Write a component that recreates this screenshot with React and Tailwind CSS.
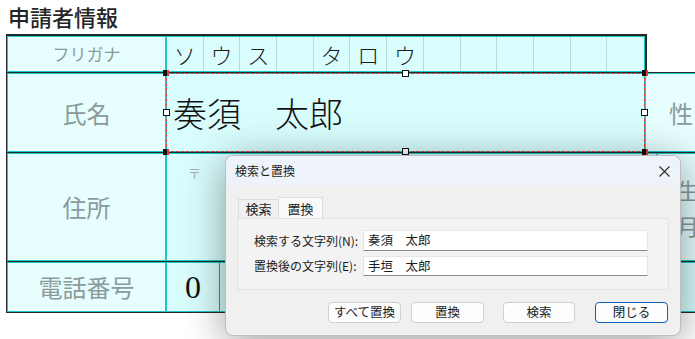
import React from "react";

const kana = ["ソ", "ウ", "ス", "", "タ", "ロ", "ウ", "", "", "", "", "", ""];

const Label = ({ className, children }) => (
    <div className={`flex shrink-0 items-center justify-center border border-[#1ec8c8] bg-[#e6fefe] text-[#8b9a9a] ${className}`}>
        {children}
    </div>
);

const Handle = ({ className, filled }) => (
    <div
        className={`absolute ${filled ? "h-[6px] w-[6px] bg-[#111] border-r-2 border-[#e53935]" : "h-[7px] w-[7px] border border-[#111] bg-white"} ${className}`}/>
);

const Dialog = () => (
    <div
        className="absolute left-[225px] top-[155px] h-[181px] w-[456px] overflow-hidden rounded-[8px] border border-[#bdbdbd] bg-[#f0f0f0] text-[12px] text-[#1b1b1b] shadow-[0_6px_42px_rgba(0,0,0,0.4)]">
        <div className="flex h-[30px] items-center justify-between bg-[#eef2f9] pl-[9px] pr-[10px]">
            <span className="leading-none">検索と置換</span>
            <svg className="h-[11px] w-[11px]" viewBox="0 0 11 11" fill="none" stroke="#2a2a2a" strokeWidth="1.1">
                <path d="M0.5 0.5 L10.5 10.5 M10.5 0.5 L0.5 10.5"/>
            </svg>
        </div>
        <div className="pl-[11px] pr-[12px] pt-[11px]">
            <div className="flex items-end pl-[1px]">
                <div className="flex h-[19px] w-[41px] items-center justify-center border border-b-0 border-[#dcdcdc] bg-[#f0f0f0] text-[13px]">
                    検索
                </div>
                <div className="flex h-[21px] w-[44px] items-start justify-center border border-b-0 border-l-0 border-[#dcdcdc] bg-[#f9f9f9] pt-[1px] text-[13px]">
                    置換
                </div>
            </div>
            <div className="h-[72px] w-[432px] border border-[#e2e2e2] bg-[#f3f3f3] pl-[16px] pt-[11px]">
                <div className="flex h-[21px] items-center">
                    <span className="w-[109px]">検索する文字列(N):</span>
                    <div className="flex h-[21px] w-[285px] items-center border border-[#e6e6e6] border-b-[#8a8a8a] bg-white pl-[4px] text-[12.5px]">
                        奏須　太郎
                    </div>
                </div>
                <div className="mt-[5px] flex h-[20px] items-center">
                    <span className="w-[109px]">置換後の文字列(E):</span>
                    <div className="flex h-[20px] w-[285px] items-center border border-[#e6e6e6] border-b-[#8a8a8a] bg-white pl-[4px] text-[12.5px]">
                        手垣　太郎
                    </div>
                </div>
            </div>
            <div className="mt-[12px] flex h-[21px] pl-[91px] text-[12.5px]">
                <button className="h-[21px] w-[73px] rounded-[4px] border border-[#d0d0d0] bg-[#fdfdfd]">すべて置換</button>
                <button className="ml-[10px] h-[21px] w-[73px] rounded-[4px] border border-[#d0d0d0] bg-[#fdfdfd]">置換</button>
                <button className="ml-[19px] h-[21px] w-[72px] rounded-[4px] border border-[#d0d0d0] bg-[#fdfdfd]">検索</button>
                <button className="ml-[20px] h-[21px] w-[73px] rounded-[4px] border border-[#0a63b8] bg-[#fdfdfd]">閉じる</button>
            </div>
        </div>
    </div>
);

export default function App() {
    return (
        <div className="relative h-[339px] w-[695px] overflow-hidden bg-white font-['Noto_Sans_CJK_JP',sans-serif]">
            <h1 className="h-[34px] pl-[8px] pt-[3px] text-[22px] font-medium leading-[26px] text-[#262626]">申請者情報</h1>

            <div className="ml-[6px] w-[780px]">
                {/* フリガナ */}
                <div className="flex h-[39px] border-b border-[#2a2a2a]">
                    <div className="flex w-[641px] border-l border-r-2 border-t-2 border-[#262626]">
                        <Label className="w-[159px] text-[17px]">フリガナ</Label>
                        <div className="grid w-[479px] grid-cols-13 border border-[#1ec8c8] bg-[#dafefe]">
                            {kana.map((k, i) => (
                                <div
                                    key={i}
                                    className={`flex items-center justify-center text-[22px] font-light text-[#1c1c1c] ${i < 12 ? "border-r border-[#bcd8d8]" : ""}`}>
                                    {k}
                                </div>
                            ))}
                        </div>
                    </div>
                </div>

                {/* 氏名 */}
                <div className="flex h-[80px] border-b border-l border-[#2a2a2a]">
                    <Label className="w-[159px] text-[24px]">氏名</Label>
                    <div className="relative flex w-[479px] shrink-0 items-center border border-[#1ec8c8] bg-[#d9fdfd] pl-[6px] text-[34px] font-light text-[#111]">
                        奏須　太郎
                        <div className="absolute -inset-[1px] border border-dashed border-[#e53935]"/>
                        <Handle filled className="-left-[4px] -top-[4px]"/>
                        <Handle filled className="-right-[4px] -top-[4px]"/>
                        <Handle filled className="-bottom-[4px] -left-[4px]"/>
                        <Handle filled className="-bottom-[4px] -right-[4px]"/>
                        <Handle className="-top-[4px] left-[235px]"/>
                        <Handle className="-bottom-[4px] left-[235px]"/>
                        <Handle className="-left-[4px] top-[35px]"/>
                        <Handle className="-right-[4px] top-[35px]"/>
                    </div>
                    <Label className="w-[120px] justify-start pl-[23px] text-[24px]">性</Label>
                </div>

                {/* 住所 */}
                <div className="flex h-[109px] border-b border-l border-[#2a2a2a]">
                    <Label className="w-[159px] text-[24px]">住所</Label>
                    <div className="w-[491px] shrink-0 border border-[#1ec8c8] bg-[#d9fdfd] pl-[21px] pt-[9px] text-[13px] text-[#9fb0b0]">
                        〒
                    </div>
                    <Label className="w-[120px] flex-col items-start justify-center pl-[19px] text-[22px] leading-[36px]">
                        <span>生</span>
                        <span>月</span>
                    </Label>
                </div>

                {/* 電話番号 */}
                <div className="flex h-[51px] border-b border-l border-[#2a2a2a]">
                    <Label className="w-[159px] text-[24px]">電話番号</Label>
                    <div className="flex border border-[#1ec8c8] bg-[#d9fdfd] font-['Liberation_Serif',serif] text-[32px] text-[#111]">
                        <div className="flex w-[53px] items-center justify-center border-r border-[#777]">0</div>
                        {[0, 1, 2, 3, 4, 5, 6, 7, 8, 9].map(i => (
                            <div key={i} className="w-[53px] border-r border-[#9fbcbc]"/>
                        ))}
                    </div>
                </div>
            </div>

            <Dialog/>
        </div>
    );
}
